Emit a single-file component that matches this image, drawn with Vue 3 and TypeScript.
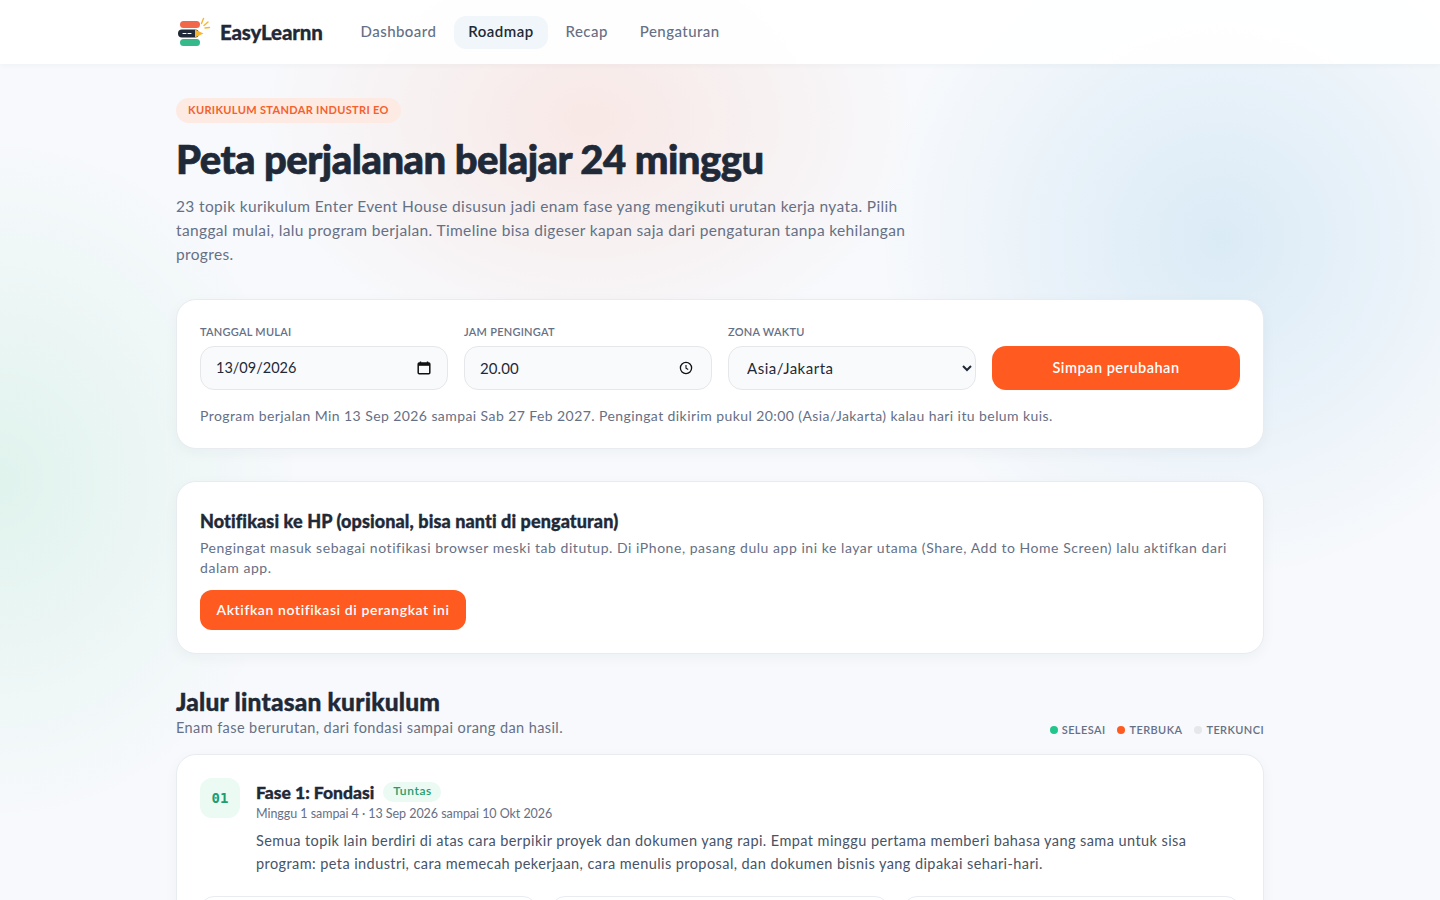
<script setup lang="ts">
const navItems = [
  { label: 'Dashboard', active: false },
  { label: 'Roadmap', active: true },
  { label: 'Recap', active: false },
  { label: 'Pengaturan', active: false }
]

const legend = [
  { label: 'SELESAI', color: '#22c58b' },
  { label: 'TERBUKA', color: '#ff5a1f' },
  { label: 'TERKUNCI', color: '#e5e7eb' }
]

const topicCount = 3
</script>

<template>
  <div class="page">
    <header class="nav">
      <div class="nav-inner">
        <a class="brand">
          <svg class="logo" width="34" height="32" viewBox="0 0 34 32" fill="none">
            <rect x="3" y="5" width="20" height="7" rx="3.5" fill="#f0674a" />
            <rect x="1" y="13.5" width="21" height="8" rx="4" fill="#1f2937" />
            <path d="M18 13.5 L26.5 17.5 L18 21.5 Z" fill="#f7b733" />
            <path d="M6 17.5h3M11 17.5h3" stroke="#fff" stroke-width="1.2" stroke-linecap="round" />
            <rect x="3" y="23" width="20" height="7" rx="3.5" fill="#35b98a" />
            <path d="M24.5 7.5 L26.5 2.5 M27 9.5 L31 6 M28 12 L32.5 11.5" stroke="#f7b733" stroke-width="1.4" stroke-linecap="round" />
          </svg>
          <span class="brand-name">EasyLearnn</span>
        </a>
        <nav class="nav-links">
          <a v-for="item in navItems" :key="item.label" class="nav-link" :class="{ active: item.active }">{{ item.label }}</a>
        </nav>
      </div>
    </header>

    <main class="main">
      <span class="eyebrow">KURIKULUM STANDAR INDUSTRI EO</span>
      <h1 class="title">Peta perjalanan belajar 24 minggu</h1>
      <p class="lead">
        23 topik kurikulum Enter Event House disusun jadi enam fase yang mengikuti urutan kerja nyata. Pilih
        tanggal mulai, lalu program berjalan. Timeline bisa digeser kapan saja dari pengaturan tanpa kehilangan
        progres.
      </p>

      <section class="card schedule">
        <div class="fields">
          <label class="field">
            <span class="field-label">TANGGAL MULAI</span>
            <span class="control">
              <input class="input input-date" type="text" value="13/09/2026" />
              <svg class="control-icon icon-date" width="16" height="16" viewBox="0 0 16 16" fill="none">
                <path d="M4.5 1.5v2M11.5 1.5v2" stroke="#111" stroke-width="1.4" />
                <rect x="2.2" y="3" width="11.6" height="10.8" rx="1" stroke="#111" stroke-width="1.5" />
                <rect x="2.2" y="3" width="11.6" height="2.8" fill="#111" />
              </svg>
            </span>
          </label>
          <label class="field">
            <span class="field-label">JAM PENGINGAT</span>
            <span class="control">
              <input class="input input-time" type="text" value="20.00" />
              <svg class="control-icon icon-time" width="16" height="16" viewBox="0 0 16 16" fill="none">
                <circle cx="8" cy="8" r="5.6" stroke="#111" stroke-width="1.3" />
                <path d="M8 5v3.2l2.2 1.3" stroke="#111" stroke-width="1.1" />
              </svg>
            </span>
          </label>
          <label class="field">
            <span class="field-label">ZONA WAKTU</span>
            <select class="input select">
              <option>Asia/Jakarta</option>
            </select>
          </label>
          <button class="btn btn-save" type="button">Simpan perubahan</button>
        </div>
        <p class="note">Program berjalan Min 13 Sep 2026 sampai Sab 27 Feb 2027. Pengingat dikirim pukul 20:00 (Asia/Jakarta) kalau hari itu belum kuis.</p>
      </section>

      <section class="card notif">
        <h2 class="notif-title">Notifikasi ke HP (opsional, bisa nanti di pengaturan)</h2>
        <p class="notif-text">Pengingat masuk sebagai notifikasi browser meski tab ditutup. Di iPhone, pasang dulu app ini ke layar utama (Share, Add to Home Screen) lalu aktifkan dari dalam app.</p>
        <button class="btn btn-notif" type="button">Aktifkan notifikasi di perangkat ini</button>
      </section>

      <div class="section-head">
        <div>
          <h2 class="section-title">Jalur lintasan kurikulum</h2>
          <p class="section-sub">Enam fase berurutan, dari fondasi sampai orang dan hasil.</p>
        </div>
        <ul class="legend">
          <li v-for="item in legend" :key="item.label" class="legend-item">
            <i class="dot" :style="{ background: item.color }"></i>{{ item.label }}
          </li>
        </ul>
      </div>

      <section class="card phase">
        <div class="phase-head">
          <div class="phase-num">01</div>
          <div class="phase-body">
            <div class="phase-title-row">
              <h3 class="phase-title">Fase 1: Fondasi</h3>
              <span class="phase-badge">Tuntas</span>
            </div>
            <p class="phase-meta">Minggu 1 sampai 4 · 13 Sep 2026 sampai 10 Okt 2026</p>
            <p class="phase-desc">Semua topik lain berdiri di atas cara berpikir proyek dan dokumen yang rapi. Empat minggu pertama memberi bahasa yang sama untuk sisa program: peta industri, cara memecah pekerjaan, cara menulis proposal, dan dokumen bisnis yang dipakai sehari-hari.</p>
          </div>
        </div>
        <div class="topics">
          <div v-for="n in topicCount" :key="n" class="topic"></div>
        </div>
      </section>
    </main>
  </div>
</template>

<style>
html, body {
  margin: 0;
  height: 100%;
  overflow: hidden;
  background: #f7f9fc;
}
</style>

<style scoped>
* {
  box-sizing: border-box;
}
.page {
  height: 900px;
  overflow: hidden;
  font-family: "Lato", "Noto Sans", sans-serif;
  color: #1f2937;
  background:
    radial-gradient(ellipse 330px 240px at 590px 120px, rgba(255, 120, 80, 0.13), transparent 100%),
    radial-gradient(ellipse 340px 340px at 1220px 240px, rgba(90, 170, 220, 0.18), transparent 100%),
    radial-gradient(ellipse 300px 340px at 0px 480px, rgba(60, 200, 130, 0.12), transparent 100%),
    #f7f9fc;
}
.nav {
  height: 64px;
  background: rgba(255, 255, 255, 0.92);
  box-shadow: 0 1px 6px rgba(31, 41, 55, 0.04);
}
.nav-inner {
  width: 1088px;
  height: 100%;
  margin: 0 auto;
  display: flex;
  align-items: center;
}
.brand {
  display: flex;
  align-items: center;
  gap: 9px;
  margin-right: 24px;
}
.logo {
  margin-left: 1px;
}
.brand-name {
  font-size: 20.5px;
  font-weight: 900;
  color: #1f2937;
  letter-spacing: -0.2px;
  -webkit-text-stroke: 0.3px #1f2937;
}
.nav-links {
  display: flex;
  gap: 4px;
}
.nav-link {
  padding: 6px 14px 9px;
  border-radius: 12px;
  font-size: 15px;
  font-weight: 500;
  letter-spacing: 0.45px;
  color: #667085;
}
.nav-link.active {
  background: #f1f6fb;
  color: #1f2937;
  font-weight: 600;
}
.main {
  width: 1088px;
  margin: 0 auto;
  padding-top: 34px;
}
.eyebrow {
  display: inline-block;
  height: 25px;
  padding: 0 12px;
  border-radius: 13px;
  background: #fdeae3;
  color: #f4612c;
  font-size: 11px;
  font-weight: 700;
  line-height: 24px;
  letter-spacing: 0.34px;
}
.title {
  margin: 12px 0 0;
  font-size: 40px;
  font-weight: 900;
  line-height: 48px;
  color: #1f2937;
  letter-spacing: -0.5px;
  -webkit-text-stroke: 0.7px #1f2937;
}
.lead {
  width: 760px;
  margin: 11px 0 0;
  font-size: 15.5px;
  line-height: 24px;
  letter-spacing: 0.36px;
  color: #667085;
}
.card {
  background: #fff;
  border: 1px solid #e8ecf1;
  border-radius: 20px;
  box-shadow: 0 4px 14px rgba(31, 41, 55, 0.04);
}
.schedule {
  height: 150px;
  margin-top: 33px;
  padding: 24px 23px;
}
.fields {
  display: grid;
  grid-template-columns: repeat(4, 248px);
  gap: 16px;
  align-items: end;
}
.field {
  display: flex;
  flex-direction: column;
  gap: 7px;
}
.field-label {
  font-size: 11px;
  font-weight: 600;
  line-height: 15px;
  letter-spacing: 0.25px;
  color: #667085;
}
.control {
  position: relative;
  display: block;
}
.control-icon {
  position: absolute;
  top: 14px;
}
.icon-date {
  right: 16px;
}
.icon-time {
  right: 18px;
}
.input {
  display: block;
  width: 100%;
  height: 44px;
  padding: 0 15px 1px;
  border: 1px solid #e5e7eb;
  border-radius: 14px;
  background: #f9fafb;
  font-family: inherit;
  font-size: 15px;
  letter-spacing: 0.5px;
  color: #1f2937;
  outline: none;
}
.input-date {
  font-size: 14.5px;
  letter-spacing: 0;
}
.input-time {
  letter-spacing: 0.1px;
}
.select {
  padding-left: 14px;
}
.btn {
  border: 0;
  padding: 0 0 2px;
  background: #ff5a1f;
  color: #fff;
  font-family: inherit;
  font-weight: 600;
  letter-spacing: 0.5px;
}
.btn-save {
  height: 44px;
  border-radius: 14px;
  font-size: 14.5px;
}
.note {
  margin: 16px 0 0;
  font-size: 14px;
  line-height: 20px;
  letter-spacing: 0.42px;
  color: #667085;
}
.notif {
  height: 173px;
  margin-top: 32px;
  padding: 28px 23px 0;
}
.notif-title {
  margin: 0;
  font-size: 18px;
  font-weight: 900;
  line-height: 22px;
  letter-spacing: 0.1px;
  color: #1f2937;
  -webkit-text-stroke: 0.35px #1f2937;
}
.notif-text {
  margin: 6px 0 0;
  font-size: 14px;
  line-height: 20px;
  letter-spacing: 0.54px;
  color: #667085;
}
.btn-notif {
  display: block;
  width: 266px;
  height: 40px;
  margin-top: 12px;
  border-radius: 12px;
  font-size: 14px;
  letter-spacing: 0.6px;
}
.section-head {
  display: flex;
  justify-content: space-between;
  align-items: flex-end;
  margin-top: 32px;
}
.section-title {
  margin: 1px 0 0;
  font-size: 24.5px;
  font-weight: 900;
  line-height: 30px;
  letter-spacing: 0.2px;
  color: #1f2937;
  -webkit-text-stroke: 0.4px #1f2937;
}
.section-sub {
  margin: 1px 0 0;
  font-size: 14.5px;
  line-height: 20px;
  letter-spacing: 0.41px;
  color: #667085;
}
.legend {
  display: flex;
  gap: 12px;
  margin: 0;
  padding: 0;
  list-style: none;
}
.legend-item {
  display: flex;
  align-items: center;
  gap: 4px;
  font-size: 11px;
  font-weight: 600;
  line-height: 16px;
  letter-spacing: 0.4px;
  color: #667085;
}
.dot {
  width: 8px;
  height: 8px;
  border-radius: 50%;
}
.phase {
  margin-top: 16px;
  padding: 23px 23px 24px;
}
.phase-head {
  display: flex;
  gap: 16px;
}
.phase-num {
  flex: none;
  width: 40px;
  height: 40px;
  border-radius: 12px;
  background: #ebfaf3;
  color: #1f9d6f;
  font-family: "DejaVu Sans Mono", monospace;
  font-size: 14px;
  font-weight: 700;
  line-height: 40px;
  text-align: center;
}
.phase-title-row {
  display: flex;
  align-items: center;
  gap: 9px;
  margin-top: 3px;
}
.phase-title {
  margin: 0;
  font-size: 17.5px;
  font-weight: 900;
  line-height: 24px;
  color: #1f2937;
  -webkit-text-stroke: 0.35px #1f2937;
}
.phase-badge {
  height: 20px;
  margin-bottom: 2px;
  padding: 0 9px 0 10px;
  border-radius: 10px;
  background: #ebfaf3;
  color: #1f9d6f;
  font-size: 12px;
  font-weight: 600;
  line-height: 18px;
  letter-spacing: 0.6px;
}
.phase-meta {
  margin: 0;
  font-size: 12.5px;
  line-height: 18px;
  letter-spacing: -0.05px;
  color: #667085;
}
.phase-desc {
  margin: 6px 0 0;
  font-size: 14.5px;
  line-height: 23px;
  letter-spacing: 0.42px;
  color: #475467;
}
.topics {
  display: grid;
  grid-template-columns: repeat(3, 1fr);
  gap: 14px;
  margin-top: 21px;
}
.topic {
  height: 90px;
  border: 1px solid #e8ecf1;
  border-radius: 14px;
}
</style>
